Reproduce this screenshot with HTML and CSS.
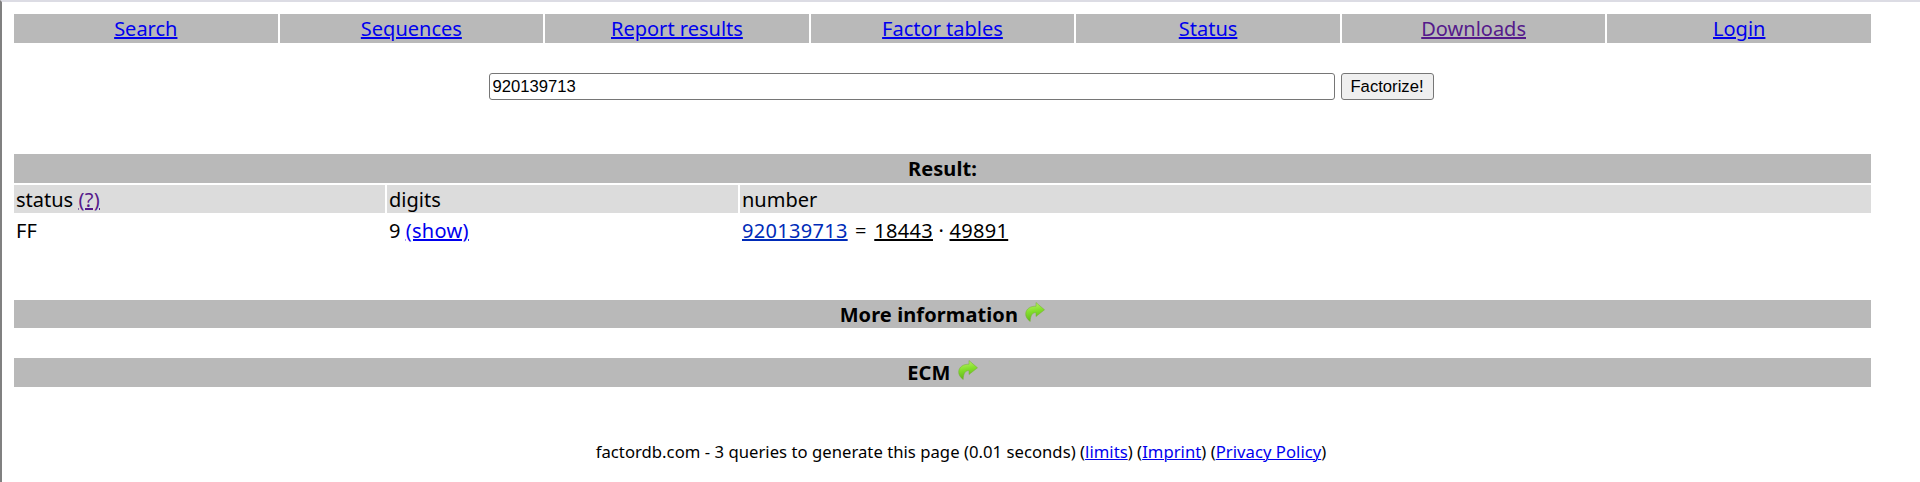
FILE: index.html
```html
<!DOCTYPE html>
<html lang="en">
<head>
    <meta charset="UTF-8">
    <title>factordb.com</title>
    <link rel="stylesheet" href="styles.css">
</head>
<body>
    <svg width="0" height="0" class="defs">
        <defs>
            <linearGradient id="arrowFill" x1="0.3" y1="0" x2="0.5" y2="1">
                <stop offset="0" stop-color="#bdf06a"/>
                <stop offset="0.45" stop-color="#84e02c"/>
                <stop offset="1" stop-color="#5fb01a"/>
            </linearGradient>
            <symbol id="arrow" viewBox="0 0 20 20">
                <path d="M11 0.5 L19.5 7.8 L11 14.5 V10.6 C7.8 10.4 5.4 13 5.2 19.5 C2 17.2 0.5 14.5 0.7 11.5 C1 6.8 5.6 4 11 4.2 Z" fill="url(#arrowFill)" stroke="#72b02e" stroke-width="0.5" stroke-linejoin="round"/>
            </symbol>
        </defs>
    </svg>

    <nav class="nav">
        <div class="nav-cell"><a href="#">Search</a></div>
        <div class="nav-cell"><a href="#">Sequences</a></div>
        <div class="nav-cell"><a href="#">Report results</a></div>
        <div class="nav-cell"><a href="#">Factor tables</a></div>
        <div class="nav-cell"><a href="#">Status</a></div>
        <div class="nav-cell"><a href="#" class="visited">Downloads</a></div>
        <div class="nav-cell"><a href="#">Login</a></div>
    </nav>

    <form class="search">
        <input class="search-input" type="text" value="920139713">
        <button class="search-btn" type="button">Factorize!</button>
    </form>

    <section class="result">
        <div class="bar result-title">Result:</div>
        <div class="result-grid">
            <div class="head">status <a href="#" class="visited">(?)</a></div>
            <div class="head">digits</div>
            <div class="head">number</div>
            <div class="cell">FF</div>
            <div class="cell">9 <a href="#">(show)</a></div>
            <div class="cell factors"><a href="#" class="num">920139713</a> = <a href="#" class="factor">18443</a> <span class="dot">·</span> <a href="#" class="factor">49891</a></div>
        </div>
    </section>

    <div class="bar more">More information <svg class="arrow"><use href="#arrow"/></svg></div>
    <div class="bar ecm">ECM <svg class="arrow"><use href="#arrow"/></svg></div>

    <footer class="footer">
        factordb.com - 3 queries to generate this page (0.01 seconds) (<a href="#">limits</a>) (<a href="#">Imprint</a>) (<a href="#">Privacy Policy</a>)
    </footer>
</body>
</html>
```

FILE: styles.css
```css
* {
    box-sizing: border-box;
}
html, body {
    height: 100%;
}
body {
    margin: 0;
    padding: 12px 12px 0 12px;
    border-top: 2px solid #dcdce4;
    border-left: 2px solid #808080;
    font-family: Tahoma, "Noto Sans", sans-serif;
    font-size: 20px;
    color: #000;
    background: #fff;
    overflow: hidden;
}
a {
    color: #00e;
    text-decoration-thickness: 2px;
}
a.visited {
    color: #551a8b;
}
.defs {
    position: absolute;
}
.nav {
    display: grid;
    grid-template-columns: repeat(7, 1fr);
    gap: 2px;
    width: 1857px;
}
.nav-cell {
    height: 29px;
    line-height: 29px;
    background: #b9b9b9;
    text-align: center;
}
.search {
    display: flex;
    justify-content: center;
    gap: 6px;
    margin: 30px 0 54px;
}
.search-input {
    width: 846px;
    height: 27px;
    padding: 1px 3px;
    border: 1px solid #767676;
    border-radius: 3px;
    font-family: "Liberation Sans", Arial, sans-serif;
    font-size: 16.67px;
}
.search-btn {
    width: 93px;
    height: 27px;
    padding: 0;
    border: 1px solid #767676;
    border-radius: 3px;
    background: #efefef;
    font-family: "Liberation Sans", Arial, sans-serif;
    font-size: 16.67px;
}
.result {
    width: 1857px;
}
.bar {
    width: 1857px;
    background: #b9b9b9;
    text-align: center;
    font-weight: bold;
    letter-spacing: 0.1px;
    height: 29px;
    line-height: 30px;
}
.result-grid {
    display: grid;
    grid-template-columns: 371px 351px 1fr;
    column-gap: 2px;
    margin-top: 2px;
}
.head {
    height: 28px;
    line-height: 30px;
    padding-left: 2px;
    background: #dcdcdc;
}
.head a, .cell a {
    letter-spacing: 0.3px;
}
.cell {
    height: 34px;
    line-height: 36px;
    padding-left: 2px;
}
.factors {
    letter-spacing: 0.25px;
    word-spacing: 2px;
}
.dot {
    margin: 0 -2px;
}
a.num {
    color: #002bb8;
}
a.factor {
    color: #000;
}
.more {
    margin-top: 53px;
    height: 28px;
}
.ecm {
    margin-top: 30px;
    line-height: 29px;
}
.arrow {
    width: 20px;
    height: 20px;
    margin-left: 2px;
    vertical-align: 0;
}
.footer {
    margin-top: 53px;
    text-align: center;
    font-size: 16.67px;
    letter-spacing: 0.03px;
}
.footer a {
    text-decoration-thickness: 1px;
}
```
